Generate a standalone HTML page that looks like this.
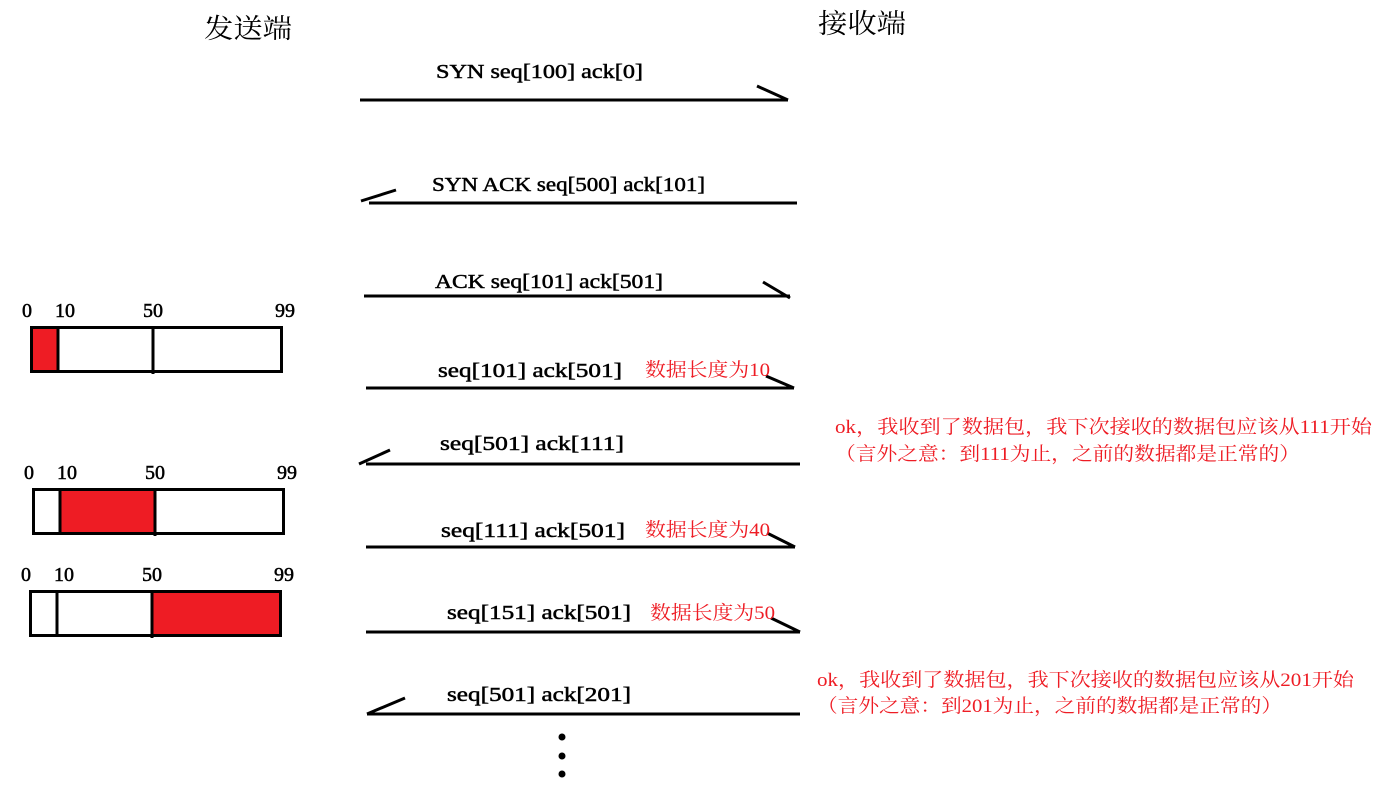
<!DOCTYPE html>
<html><head><meta charset="utf-8"><style>
html,body{margin:0;padding:0;background:#fff;width:1387px;height:790px;overflow:hidden}
svg{display:block}
text{font-family:"Liberation Serif","Noto Serif CJK SC",serif;font-size:20px;fill:#000}
.b{stroke:#000;stroke-width:0.5}
.r{fill:#ee1c24;font-size:19px}
.h{font-family:"Noto Serif CJK SC",serif;font-size:27px}
</style></head><body>
<svg width="1387" height="790" viewBox="0 0 1387 790">
<text class="h" x="204" y="38" textLength="88" lengthAdjust="spacingAndGlyphs">发送端</text>
<text class="h" x="818" y="33" textLength="88" lengthAdjust="spacingAndGlyphs">接收端</text>
<g stroke="#000" stroke-width="3" fill="none">
<line x1="360" y1="100" x2="788" y2="100"/><line x1="757" y1="86" x2="788" y2="100"/>
<line x1="369" y1="203" x2="797" y2="203"/><line x1="361" y1="201" x2="396" y2="190"/>
<line x1="364" y1="296" x2="790" y2="296"/><line x1="763" y1="282" x2="790" y2="298"/>
<line x1="366" y1="388" x2="794" y2="388"/><line x1="766" y1="376" x2="794" y2="388"/>
<line x1="366" y1="464" x2="800" y2="464"/><line x1="359" y1="464" x2="390" y2="450"/>
<line x1="366" y1="547" x2="795" y2="547"/><line x1="767" y1="533" x2="795" y2="547"/>
<line x1="366" y1="632" x2="800" y2="632"/><line x1="771" y1="618" x2="800" y2="632"/>
<line x1="367" y1="714" x2="800" y2="714"/><line x1="367" y1="714" x2="405" y2="698"/>
</g>
<circle cx="562" cy="737" r="3.5"/><circle cx="562" cy="756" r="3.5"/><circle cx="562" cy="774" r="3.5"/>
<g class="b">
<text x="436" y="78" textLength="207" lengthAdjust="spacingAndGlyphs">SYN seq[100] ack[0]</text>
<text x="432" y="191" textLength="273" lengthAdjust="spacingAndGlyphs">SYN ACK seq[500] ack[101]</text>
<text x="435" y="288" textLength="228" lengthAdjust="spacingAndGlyphs">ACK seq[101] ack[501]</text>
<text x="438" y="377" textLength="184" lengthAdjust="spacingAndGlyphs">seq[101] ack[501]</text>
<text x="440" y="450" textLength="184" lengthAdjust="spacingAndGlyphs">seq[501] ack[111]</text>
<text x="441" y="537" textLength="184" lengthAdjust="spacingAndGlyphs">seq[111] ack[501]</text>
<text x="447" y="619" textLength="184" lengthAdjust="spacingAndGlyphs">seq[151] ack[501]</text>
<text x="447" y="701" textLength="184" lengthAdjust="spacingAndGlyphs">seq[501] ack[201]</text>
<text x="22" y="317">0</text><text x="55" y="317">10</text><text x="143" y="317">50</text><text x="275" y="317">99</text>
<text x="24" y="479">0</text><text x="57" y="479">10</text><text x="145" y="479">50</text><text x="277" y="479">99</text>
<text x="21" y="581">0</text><text x="54" y="581">10</text><text x="142" y="581">50</text><text x="274" y="581">99</text>
</g>
<text class="r" x="645" y="376" textLength="125" lengthAdjust="spacingAndGlyphs">数据长度为10</text>
<text class="r" x="645" y="536" textLength="125" lengthAdjust="spacingAndGlyphs">数据长度为40</text>
<text class="r" x="650" y="619" textLength="125" lengthAdjust="spacingAndGlyphs">数据长度为50</text>
<text class="r" x="835" y="433" textLength="537" lengthAdjust="spacingAndGlyphs">ok，我收到了数据包，我下次接收的数据包应该从111开始</text>
<text class="r" x="835" y="460" textLength="465" lengthAdjust="spacingAndGlyphs">（言外之意：到111为止，之前的数据都是正常的）</text>
<text class="r" x="817" y="686" textLength="537" lengthAdjust="spacingAndGlyphs">ok，我收到了数据包，我下次接收的数据包应该从201开始</text>
<text class="r" x="817" y="712" textLength="465" lengthAdjust="spacingAndGlyphs">（言外之意：到201为止，之前的数据都是正常的）</text>
<rect x="31" y="327" width="27" height="45" fill="#ee1c24"/>
<rect x="60" y="489" width="95" height="45" fill="#ee1c24"/>
<rect x="152" y="591" width="129" height="45" fill="#ee1c24"/>
<g stroke="#000" stroke-width="3" fill="none">
<rect x="31.5" y="327.5" width="250" height="44"/><line x1="58" y1="327" x2="58" y2="372"/><line x1="153" y1="327" x2="153" y2="374"/>
<rect x="33.5" y="489.5" width="250" height="44"/><line x1="60" y1="489" x2="60" y2="534"/><line x1="155" y1="489" x2="155" y2="536"/>
<rect x="30.5" y="591.5" width="250" height="44"/><line x1="57" y1="591" x2="57" y2="636"/><line x1="152" y1="591" x2="152" y2="638"/>
</g>
</svg>
</body></html>
